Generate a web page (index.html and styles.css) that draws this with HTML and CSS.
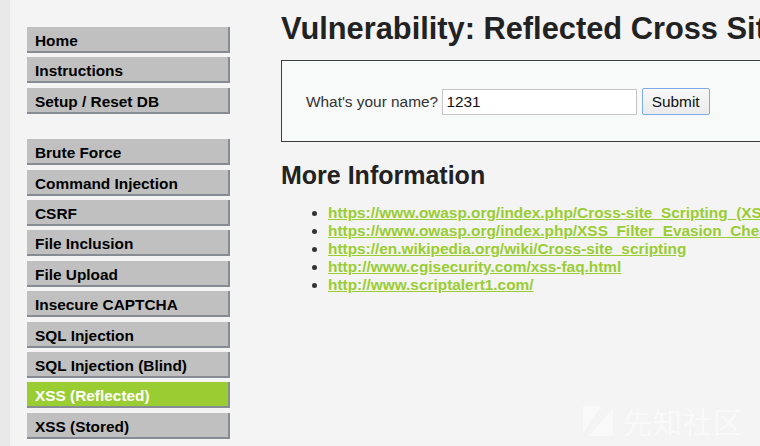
FILE: index.html
```html
<!DOCTYPE html>
<html>
<head>
<meta charset="utf-8">
<link rel="stylesheet" href="styles.css">
</head>
<body>
<div class="page">
  <div class="strip"></div>
  <nav class="menu">
    <ul class="group">
      <li><a href="#">Home</a></li>
      <li><a href="#">Instructions</a></li>
      <li><a href="#">Setup / Reset DB</a></li>
    </ul>
    <ul class="group">
      <li><a href="#">Brute Force</a></li>
      <li><a href="#">Command Injection</a></li>
      <li><a href="#">CSRF</a></li>
      <li><a href="#">File Inclusion</a></li>
      <li><a href="#">File Upload</a></li>
      <li><a href="#">Insecure CAPTCHA</a></li>
      <li><a href="#">SQL Injection</a></li>
      <li><a href="#">SQL Injection (Blind)</a></li>
      <li class="selected"><a href="#">XSS (Reflected)</a></li>
      <li><a href="#">XSS (Stored)</a></li>
    </ul>
  </nav>
  <main class="main">
    <h1 class="title">Vulnerability: Reflected Cross Site Scripting (XSS)</h1>
    <div class="vulnerable">
      <form class="form">
        <label class="label">What's your name?</label> <input class="field" type="text" value="1231"> <button class="submit" type="button">Submit</button>
      </form>
    </div>
    <h2 class="subtitle">More Information</h2>
    <ul class="links">
      <li><a href="#">https://www.owasp.org/index.php/Cross-site_Scripting_(XSS)</a></li>
      <li><a href="#">https://www.owasp.org/index.php/XSS_Filter_Evasion_Cheat_Sheet</a></li>
      <li><a href="#">https://en.wikipedia.org/wiki/Cross-site_scripting</a></li>
      <li><a href="#">http://www.cgisecurity.com/xss-faq.html</a></li>
      <li><a href="#">http://www.scriptalert1.com/</a></li>
    </ul>
  </main>
</div>
<div class="watermark">
  <svg class="wm-logo" width="30" height="30" viewBox="0 0 30 30">
    <polygon points="0,0 18,0 0,28" fill="#ffffff" opacity="0.45"/>
    <polygon points="30,2 30,30 6,30" fill="#ffffff" opacity="0.45"/>
  </svg>
  <span class="wm-text">先知社区</span>
</div>
</body>
</html>
```

FILE: styles.css
```css
html, body {
  margin: 0;
  padding: 0;
  background: #f4f4f4;
  overflow: hidden;
  width: 760px;
  height: 446px;
}

body {
  font-family: Arial, "Liberation Sans", Helvetica, sans-serif;
  font-size: 15.4px;
  color: #333;
}

.page {
  display: flex;
  align-items: flex-start;
  height: 446px;
}

.strip {
  flex: 0 0 10px;
  align-self: stretch;
  background: #e9e9e9;
}

.menu {
  flex: 0 0 203px;
  margin-left: 17px;
  padding-top: 27px;
}

.group {
  list-style: none;
  margin: 0 0 25.4px 0;
  padding: 0;
}

.group li {
  margin-bottom: 4.4px;
}

.group a {
  display: block;
  height: 21px;
  padding: 3px 8px 0 8px;
  line-height: 21px;
  font-weight: bold;
  color: #000;
  text-decoration: none;
  background: #c0c0c0;
  border-right: 2px solid #878c94;
  border-bottom: 2px solid #878c94;
  white-space: nowrap;
}

.group li.selected a {
  background: #9acd32;
  color: #fff;
}

.main {
  flex: 0 0 auto;
  width: 560px;
  margin-left: 51px;
  white-space: nowrap;
}

.title {
  margin: 10.7px 0 13.2px 0;
  font-size: 30.8px;
  font-weight: bold;
  color: #222;
  line-height: normal;
}

.vulnerable {
  border: 1px solid #3c3c3c;
  background: #f8f9f9;
  padding: 27px 0 26px 24px;
}

.form {
  margin: 0;
  height: 27px;
  line-height: 27px;
}

.label {
  color: #333;
}

.field {
  box-sizing: border-box;
  width: 195px;
  height: 26px;
  border: 1px solid #c6c6c6;
  background: #fff;
  padding: 1px 3px;
  font: 15.4px Arial, "Liberation Sans", sans-serif;
  color: #111;
  vertical-align: baseline;
}

.submit {
  box-sizing: border-box;
  width: 68px;
  height: 27px;
  border: 1px solid #7eaae6;
  border-radius: 2px;
  background: linear-gradient(#f8f8f8, #ebebeb);
  font: 15.4px Arial, "Liberation Sans", sans-serif;
  color: #111;
  padding: 0;
}

.subtitle {
  margin: 19px 0 13.8px 0;
  font-size: 25px;
  font-weight: bold;
  color: #222;
  line-height: normal;
}

.links {
  margin: 0;
  padding-left: 47px;
  font-weight: bold;
}

.links a {
  color: #9acd32;
  text-decoration: underline;
}

.watermark {
  position: absolute;
  left: 583px;
  top: 404px;
  display: flex;
  align-items: center;
  gap: 10px;
}

.wm-text {
  font-family: "Noto Sans CJK SC", sans-serif;
  font-size: 29px;
  color: rgba(255, 255, 255, 0.5);
  letter-spacing: 1px;
  line-height: 34px;
}
```
